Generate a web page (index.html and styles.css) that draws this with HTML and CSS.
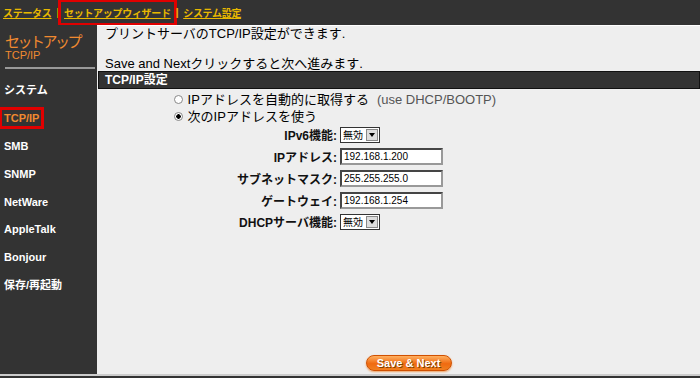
FILE: index.html
```html
<!DOCTYPE html>
<html>
<head>
<meta charset="utf-8">
<link rel="stylesheet" href="styles.css">
</head>
<body>
  <div class="topnav">
    <a href="#">ステータス</a>
    <span class="sep">|</span>
    <a href="#" class="boxed">セットアップウィザード</a>
    <span class="sep">|</span>
    <a href="#">システム設定</a>
  </div>
  <div class="wrap">
    <div class="side">
      <div class="side-title">セットアップ</div>
      <div class="side-sub">TCP/IP</div>
      <hr class="side-rule">
      <ul class="menu">
        <li>システム</li>
        <li><span class="current">TCP/IP</span></li>
        <li>SMB</li>
        <li>SNMP</li>
        <li>NetWare</li>
        <li>AppleTalk</li>
        <li>Bonjour</li>
        <li>保存/再起動</li>
      </ul>
    </div>
    <div class="main">
      <div class="intro">
        <p>プリントサーバのTCP/IP設定ができます.</p>
        <p>&nbsp;</p>
        <p>Save and Nextクリックすると次へ進みます.</p>
      </div>
      <div class="bar">TCP/IP設定</div>
      <div class="radios">
        <label><input type="radio" name="ip"> IPアドレスを自動的に取得する<span class="hint">(use DHCP/BOOTP)</span></label>
        <label><input type="radio" name="ip" checked> 次のIPアドレスを使う</label>
      </div>
      <div class="form">
        <div class="row"><span class="lbl">IPv6機能:</span><span class="sel">無効<i class="arr"></i></span></div>
        <div class="row"><span class="lbl">IPアドレス:</span><input class="txt" value="192.168.1.200"></div>
        <div class="row"><span class="lbl">サブネットマスク:</span><input class="txt" value="255.255.255.0"></div>
        <div class="row"><span class="lbl">ゲートウェイ:</span><input class="txt" value="192.168.1.254"></div>
        <div class="row"><span class="lbl">DHCPサーバ機能:</span><span class="sel">無効<i class="arr"></i></span></div>
      </div>
      <div class="actions">
        <button class="btn">Save &amp; Next</button>
      </div>
    </div>
  </div>
</body>
</html>
```

FILE: styles.css
```css
* {box-sizing: border-box;}

body {
  margin: 0;
  width: 700px;
  height: 378px;
  background: #333;
  font-family: "Liberation Sans", "Noto Sans CJK JP", sans-serif;
  overflow: hidden;
}

.topnav {
  height: 25px;
  display: flex;
  align-items: center;
  padding-left: 3px;
  font-size: 10px;
  font-weight: bold;
  letter-spacing: -0.3px;
  color: #e8b800;
}

.topnav a {
  color: #e8b800;
  text-decoration: underline;
}

.topnav .sep {
  margin: 0 5px;
}

.topnav .boxed {
  outline: 3px solid #e00000;
  outline-offset: 3px;
}

.wrap {
  display: flex;
  height: 351px;
  border-bottom: 2px solid #ccc;
}

.side {
  width: 97px;
  background: #333;
  padding-top: 9px;
}

.side-title {
  padding-left: 5px;
  font-size: 15px;
  line-height: 16px;
  letter-spacing: -2.5px;
  white-space: nowrap;
  color: #f08a30;
}

.side-sub {
  padding-left: 5px;
  font-size: 11px;
  line-height: 10px;
  color: #f08a30;
}

.side-rule {
  margin: 7px 2px 0 5px;
  border: 0;
  height: 2px;
  background: #999;
}

.menu {
  list-style: none;
  margin: 13px 0 0 0;
  padding: 0;
}

.menu li {
  padding-left: 4px;
  height: 27.9px;
  font-size: 11px;
  line-height: 16px;
  font-weight: bold;
  color: #fff;
}

.menu .current {
  color: #f08a30;
  outline: 3px solid #e00000;
  outline-offset: 2px;
}

.main {
  flex: 1;
  background: #eee;
  display: flex;
  flex-direction: column;
  border-top: 1px solid #fff;
}

.intro {
  padding-left: 8px;
  font-size: 13px;
  line-height: 15px;
}

.intro p {
  margin: 0;
}

.bar {
  margin: 0 0 0 1px;
  height: 18px;
  background: #333;
  border: 1px solid #111;
  color: #fff;
  font-size: 12px;
  font-weight: bold;
  line-height: 16px;
  padding-left: 6px;
}

.radios {
  display: flex;
  flex-direction: column;
  padding: 2px 0 0 77px;
  font-size: 13px;
  line-height: 17px;
}

.radios input {
  appearance: none;
  width: 9px;
  height: 9px;
  margin: 0 1px 0 0;
  border: 1px solid #888;
  border-radius: 50%;
  background: #fff;
  vertical-align: 0;
}

.radios input:checked {
  background: radial-gradient(circle, #000 0, #000 2px, #fff 2.5px);
}

.hint {
  color: #555;
  margin-left: 8px;
}

.form {
  margin-top: -1px;
}

.row {
  display: flex;
  align-items: center;
  height: 21.75px;
}

.lbl {
  width: 243px;
  text-align: right;
  font-size: 12px;
  font-weight: bold;
  padding-right: 3px;
  color: #111;
}

.txt {
  width: 103px;
  height: 17px;
  padding: 0 2px;
  font-size: 10px;
  font-family: "Liberation Sans", sans-serif;
  border: 2px inset #999;
  background: #fff;
}

.sel {
  display: flex;
  align-items: center;
  height: 16px;
  width: 40px;
  border: 1px solid #333;
  background: #fff;
  font-size: 10px;
  padding-left: 2px;
  justify-content: space-between;
}

.arr {
  width: 12px;
  height: 12px;
  margin-right: 1px;
  background: #ddd;
  border: 1px solid #888;
  position: relative;
}

.arr::after {
  content: "";
  position: absolute;
  left: 2px;
  top: 3px;
  border-left: 3px solid transparent;
  border-right: 3px solid transparent;
  border-top: 4px solid #000;
}

.actions {
  margin-top: auto;
  padding: 0 0 3px 20px;
  display: flex;
  justify-content: center;
}

.btn {
  width: 86px;
  height: 16px;
  border: 1px solid #d05000;
  border-radius: 8px;
  background: linear-gradient(#ffb060, #f06a10 55%, #f08020);
  color: #fff;
  font-family: "Liberation Sans", sans-serif;
  font-size: 11px;
  font-weight: bold;
  line-height: 13px;
  padding: 0;
  text-shadow: 1px 1px 0 #804000;
  box-shadow: 0 1px 2px #f0a060;
}
```
